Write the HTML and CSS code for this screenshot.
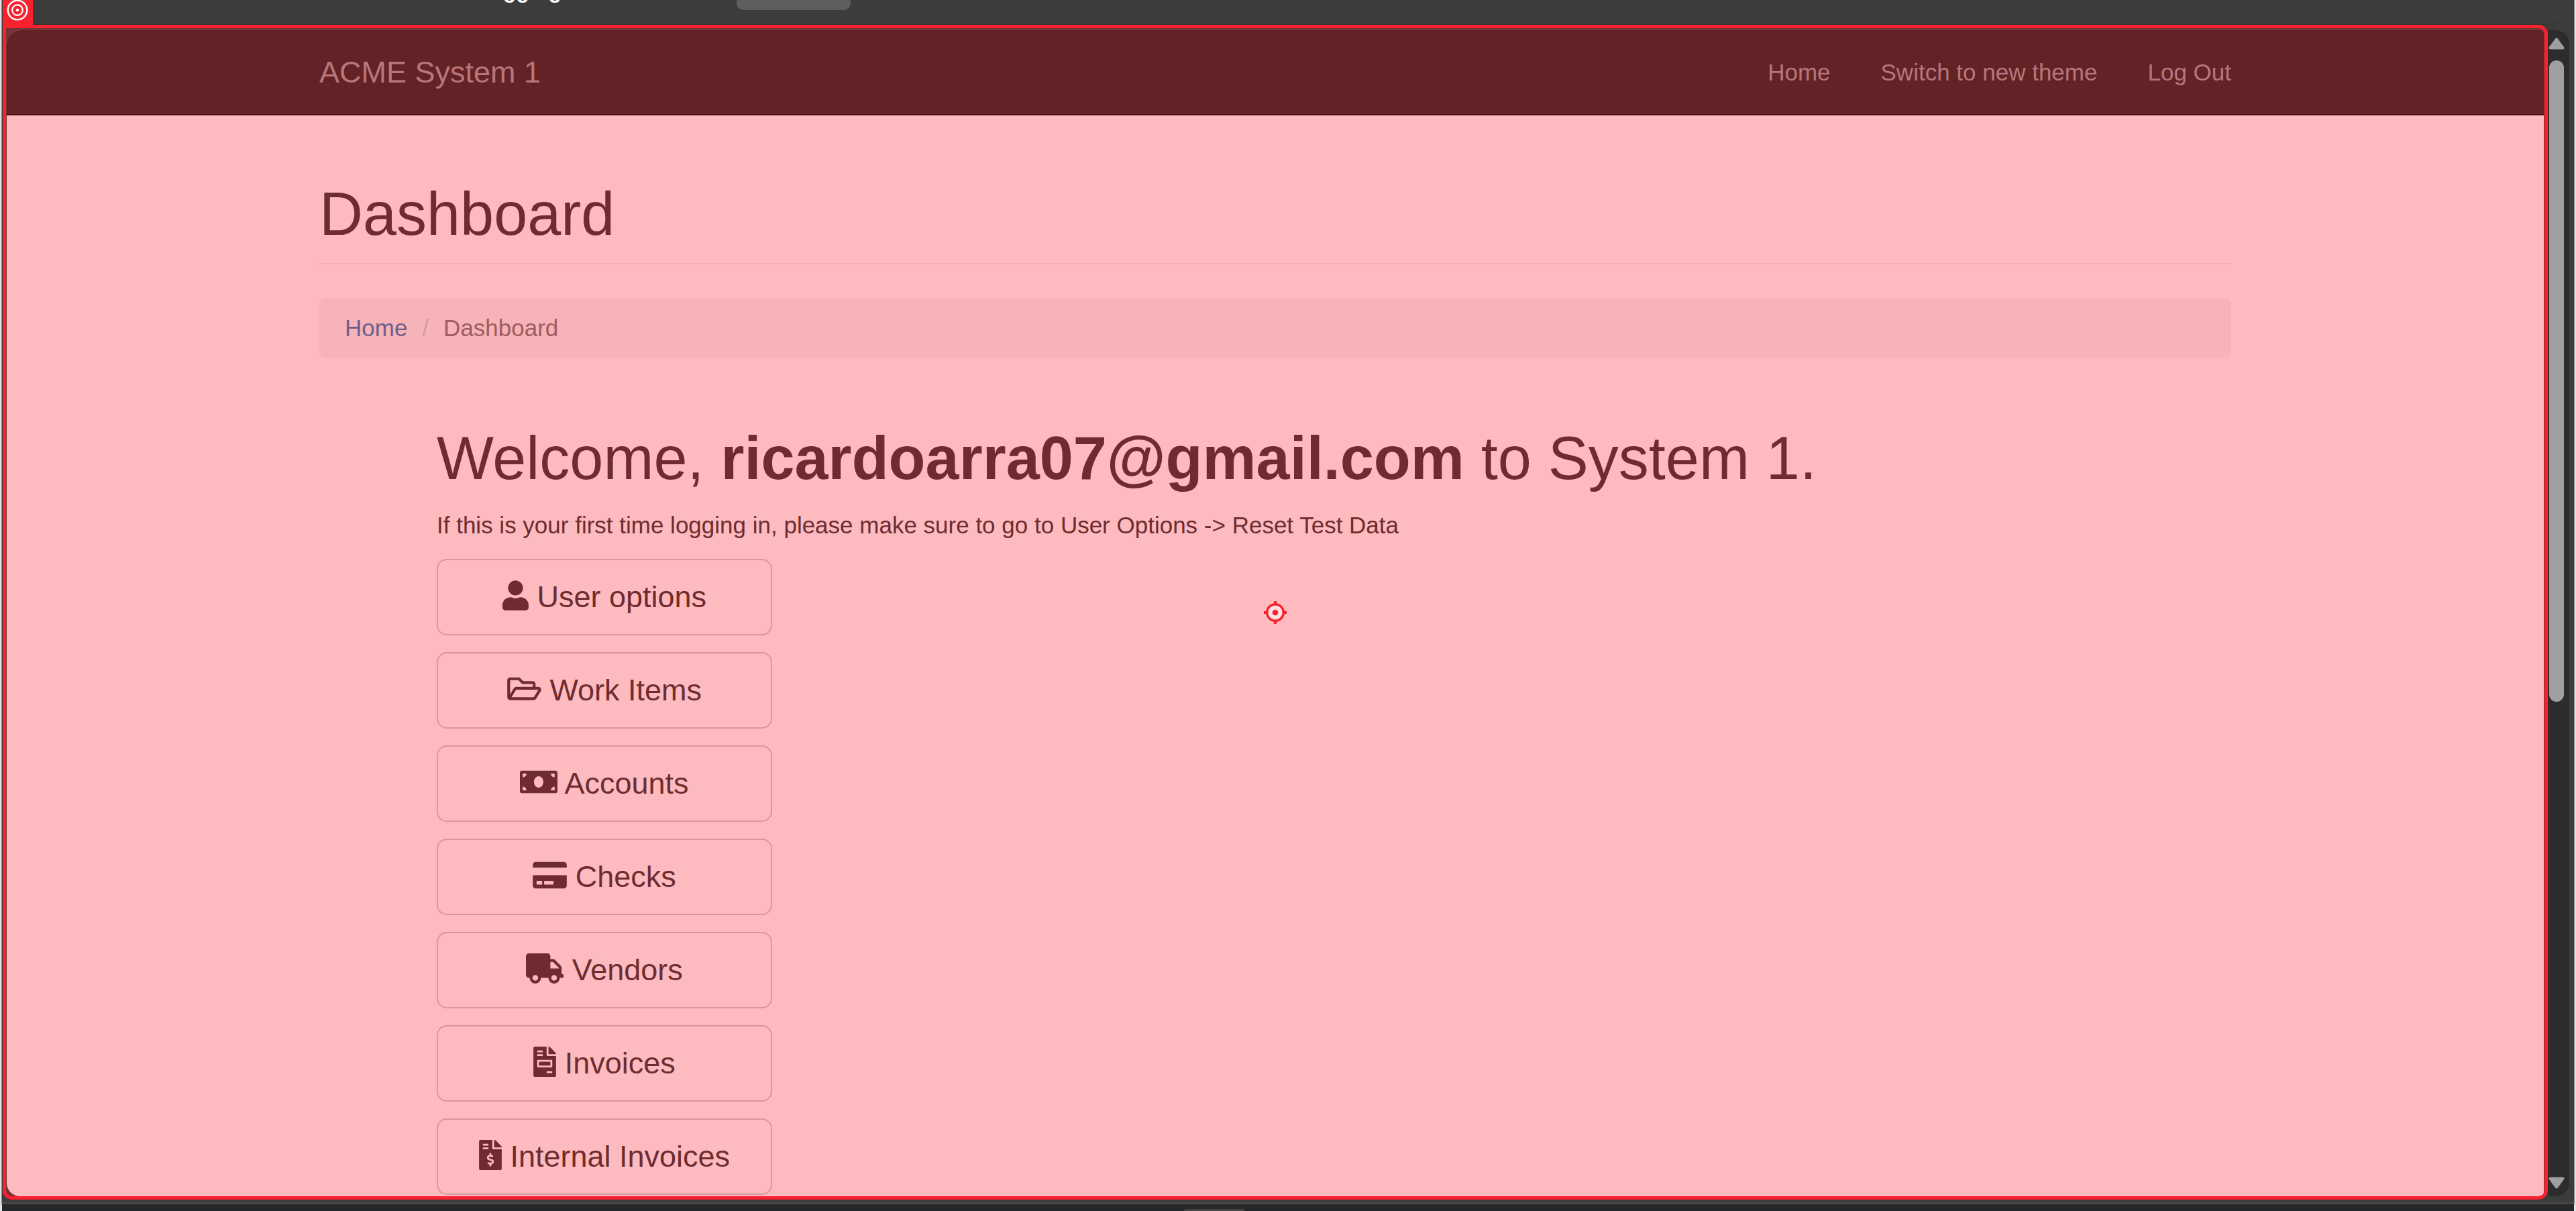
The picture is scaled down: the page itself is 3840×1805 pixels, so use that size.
FILE: index.html
```html
<!DOCTYPE html>
<html lang="en">
<head>
<meta charset="utf-8">
<title>ACME System 1 - Dashboard</title>
<link rel="stylesheet" href="styles.css">
</head>
<body>
<div class="window">
  <div class="toolbar">
    <div class="target-tab">
      <svg class="target-icon" viewBox="0 0 32 32" aria-hidden="true"><g fill="none" stroke="#fff"><circle cx="16" cy="16" r="14.3" stroke-width="2.4"/><circle cx="16" cy="16" r="7.8" stroke-width="2.4"/></g><circle cx="16" cy="16" r="2.2" fill="#fff"/></svg>
    </div>
    <span class="toolbar-title">gging</span>
    <span class="toolbar-chip"></span>
  </div>
  <div class="viewport">
    <div class="frame">
      <div class="page">
        <header class="navbar">
          <div class="container navbar-inner">
            <a class="brand" href="#">ACME System 1</a>
            <nav class="nav">
              <a href="#">Home</a>
              <a href="#">Switch to new theme</a>
              <a href="#">Log Out</a>
            </nav>
          </div>
        </header>
        <main class="container content">
          <h1 class="page-header">Dashboard</h1>
          <ol class="breadcrumb">
            <li><a href="#">Home</a></li>
            <li class="separator" aria-hidden="true">/</li>
            <li class="active">Dashboard</li>
          </ol>
          <section class="welcome">
            <h1>Welcome, <b>ricardoarra07@gmail.com</b> to System 1.</h1>
            <p>If this is your first time logging in, please make sure to go to User Options -&gt; Reset Test Data</p>
            <div class="menu">
              <button class="btn" type="button"><svg class="icon w-14" viewBox="0 0 448 512" aria-hidden="true"><path d="M224 256c70.700 0 128-57.300 128-128S294.700 0 224 0 96 57.300 96 128s57.300 128 128 128zm89.600 32h-16.700c-22.200 10.200-46.900 16-72.900 16s-50.600-5.800-72.900-16h-16.700C60.200 288 0 348.200 0 422.400V464c0 26.500 21.500 48 48 48h352c26.500 0 48-21.500 48-48v-41.600c0-74.200-60.200-134.400-134.400-134.400z"/></svg> User options</button>
              <button class="btn" type="button"><svg class="icon w-18" viewBox="0 0 576 512" aria-hidden="true"><path d="M527.900 224H480v-48c0-26.500-21.500-48-48-48H272l-64-64H48C21.500 64 0 85.500 0 112v288c0 26.500 21.500 48 48 48h400c16.500 0 31.900-8.500 40.700-22.600l79.900-128c20-31.900-3-73.400-40.700-73.400zM48 118c0-3.300 2.700-6 6-6h134.100l64 64H426c3.300 0 6 2.700 6 6v42H152c-16.800 0-32.400 8.800-41.100 23.200L48 351.400zm400 282H72l77.200-128H528z"/></svg> Work Items</button>
              <button class="btn" type="button"><svg class="icon w-20" viewBox="0 0 640 512" aria-hidden="true"><path d="M608 64H32C14.330 64 0 78.330 0 96v320c0 17.670 14.330 32 32 32h576c17.670 0 32-14.330 32-32V96c0-17.670-14.330-32-32-32zM48 400v-64c35.350 0 64 28.650 64 64H48zm0-224v-64h64c0 35.350-28.650 64-64 64zm272 176c-44.190 0-80-42.990-80-96 0-53.020 35.820-96 80-96s80 42.980 80 96c0 53.030-35.830 96-80 96zm272 48h-64c0-35.350 28.650-64 64-64v64zm0-224c-35.350 0-64-28.650-64-64h64v64z"/></svg> Accounts</button>
              <button class="btn" type="button"><svg class="icon w-18" viewBox="0 0 576 512" aria-hidden="true"><path d="M0 432c0 26.500 21.500 48 48 48h480c26.500 0 48-21.500 48-48V256H0v176zm192-68c0-6.600 5.400-12 12-12h136c6.600 0 12 5.400 12 12v40c0 6.600-5.400 12-12 12H204c-6.600 0-12-5.400-12-12v-40zm-128 0c0-6.600 5.400-12 12-12h72c6.600 0 12 5.400 12 12v40c0 6.600-5.400 12-12 12H76c-6.600 0-12-5.400-12-12v-40zM576 80v48H0V80c0-26.500 21.500-48 48-48h480c26.500 0 48 21.500 48 48z"/></svg> Checks</button>
              <button class="btn" type="button"><svg class="icon w-20" viewBox="0 0 640 512" aria-hidden="true"><path d="M624 352h-16V243.900c0-12.700-5.100-24.900-14.100-33.900L494 110.100c-9-9-21.200-14.100-33.900-14.100H416V48c0-26.500-21.500-48-48-48H48C21.500 0 0 21.500 0 48v320c0 26.500 21.500 48 48 48h16c0 53 43 96 96 96s96-43 96-96h128c0 53 43 96 96 96s96-43 96-96h48c8.800 0 16-7.200 16-16v-32c0-8.800-7.200-16-16-16zM160 464c-26.500 0-48-21.500-48-48s21.500-48 48-48 48 21.500 48 48-21.500 48-48 48zm320 0c-26.500 0-48-21.500-48-48s21.500-48 48-48 48 21.500 48 48-21.500 48-48 48zm80-208H416V144h44.100l99.900 99.900V256z"/></svg> Vendors</button>
              <button class="btn" type="button"><svg class="icon w-12" viewBox="0 0 384 512" aria-hidden="true"><path d="M288 256H96v64h192v-64zm89-151L279.100 7c-4.500-4.500-10.600-7-17-7H256v128h128v-6.100c0-6.300-2.500-12.400-7-16.900zm-153 31V0H24C10.700 0 0 10.700 0 24v464c0 13.300 10.700 24 24 24h336c13.300 0 24-10.700 24-24V160H248c-13.200 0-24-10.800-24-24zM64 72c0-4.420 3.580-8 8-8h80c4.420 0 8 3.580 8 8v16c0 4.420-3.580 8-8 8H72c-4.420 0-8-3.580-8-8V72zm0 64c0-4.420 3.580-8 8-8h80c4.420 0 8 3.580 8 8v16c0 4.420-3.580 8-8 8H72c-4.420 0-8-3.580-8-8v-16zm256 304c0 4.420-3.580 8-8 8h-80c-4.420 0-8-3.580-8-8v-16c0-4.420 3.580-8 8-8h80c4.420 0 8 3.580 8 8v16zm0-200v96c0 8.840-7.160 16-16 16H80c-8.840 0-16-7.160-16-16v-96c0-8.840 7.160-16 16-16h224c8.840 0 16 7.160 16 16z"/></svg> Invoices</button>
              <button class="btn" type="button"><svg class="icon w-12" viewBox="0 0 384 512" aria-hidden="true"><path d="M377 105L279.100 7c-4.500-4.500-10.600-7-17-7H256v128h128v-6.100c0-6.300-2.500-12.400-7-16.900zm-153 31V0H24C10.700 0 0 10.700 0 24v464c0 13.300 10.700 24 24 24h336c13.300 0 24-10.700 24-24V160H248c-13.200 0-24-10.800-24-24zM64 72c0-4.420 3.580-8 8-8h80c4.420 0 8 3.580 8 8v16c0 4.420-3.580 8-8 8H72c-4.420 0-8-3.580-8-8V72zm0 80v-16c0-4.420 3.580-8 8-8h80c4.420 0 8 3.580 8 8v16c0 4.420-3.580 8-8 8H72c-4.420 0-8-3.580-8-8zm144 263.880V440c0 4.420-3.580 8-8 8h-16c-4.420 0-8-3.580-8-8v-24.290c-11.290-.58-22.270-4.520-31.370-11.350-3.900-2.930-4.100-8.770-.57-12.140l11.750-11.210c2.770-2.640 6.890-2.760 10.130-.73 3.870 2.420 8.260 3.720 12.820 3.720h28.110c6.500 0 11.800-5.920 11.800-13.190 0-5.950-3.610-11.190-8.770-12.730l-45-13.500c-18.590-5.580-31.580-23.420-31.580-43.390 0-24.520 19.050-44.440 42.670-45.070V232c0-4.420 3.580-8 8-8h16c4.420 0 8 3.580 8 8v24.290c11.290.58 22.270 4.510 31.370 11.350 3.900 2.930 4.100 8.770.57 12.140l-11.750 11.210c-2.770 2.640-6.890 2.760-10.130.73-3.870-2.430-8.260-3.720-12.820-3.720h-28.110c-6.500 0-11.800 5.920-11.800 13.190 0 5.950 3.610 11.190 8.770 12.730l45 13.500c18.590 5.580 31.580 23.420 31.580 43.390 0 24.530-19.050 44.440-42.670 45.070z"/></svg> Internal Invoices</button>
            </div>
          </section>
        </main>
      </div>
      <svg class="crosshair" viewBox="0 0 36 36" aria-hidden="true"><circle cx="18" cy="18" r="12.300" fill="#ffdfe1" stroke="#fa212e" stroke-width="3.400"/><circle cx="18" cy="18" r="4.300" fill="#fa212e"/><path d="M18 1v5M18 30v5M1 18h5M30 18h5" stroke="#fa212e" stroke-width="4"/></svg>
    </div>
    <div class="scrollbar">
      <svg class="arrow" viewBox="0 0 24 18" aria-hidden="true"><path d="M12 2.500 21.500 15.500H2.500Z" fill="#9f9f9f" stroke="#9f9f9f" stroke-width="4" stroke-linejoin="round"/></svg>
      <div class="track"><div class="thumb"></div></div>
      <svg class="arrow" viewBox="0 0 24 18" aria-hidden="true"><path d="M12 15.500 21.500 2.500H2.500Z" fill="#9f9f9f" stroke="#9f9f9f" stroke-width="4" stroke-linejoin="round"/></svg>
    </div>
  </div>
  <div class="window-edge"></div>
</div>
<div class="taskbar"><span class="taskbar-item"></span></div>
</body>
</html>
```

FILE: styles.css
```css
* {
  box-sizing: border-box;
}

body {
  margin: 0;
  height: 100vh;
  display: flex;
  flex-direction: column;
  overflow: hidden;
  background: #e4e4e4;
  color: #6e2c30;
  font-family: "Liberation Sans", Arial, sans-serif;
  font-size: 35px;
  line-height: 50px;
}

a {
  color: inherit;
  text-decoration: none;
}

h1 {
  margin: 0;
  font-size: 90px;
  font-weight: 400;
  line-height: 99px;
}

/* Browser window */
.window {
  flex: 1;
  min-height: 0;
  display: flex;
  flex-direction: column;
  margin: 0 2px;
  border: solid #8a8a8a;
  border-width: 0 1px;
  background: #3c3c3c;
}

.toolbar {
  flex: none;
  height: 37px;
  display: flex;
  align-items: flex-start;
  margin-right: 10px;
  padding-left: 1px;
  border-bottom: 2px solid #353535;
  border-bottom-right-radius: 20px;
}

.target-tab {
  width: 45px;
  height: 37px;
  background: #fa212e;
}

.target-icon {
  display: block;
  width: 32px;
  height: 32px;
  margin: -1px 0 0 6px;
}

.toolbar-title {
  width: 348px;
  margin: -30px 0 0 701px;
  color: #fff;
  font-size: 32px;
  font-weight: 700;
  line-height: 32px;
}

.toolbar-chip {
  width: 170px;
  height: 15px;
  border-radius: 0 0 10px 10px;
  background: #5e5e5e;
}

.viewport {
  flex: 1;
  min-height: 0;
  display: flex;
  padding-left: 1px;
}

.frame {
  position: relative;
  flex: 1;
  display: flex;
  padding: 3px 1px 0;
  overflow: hidden;
  border: 5px solid #fa212e;
  border-radius: 0 14px 14px 14px;
  background: #743338;
}

.scrollbar {
  flex: none;
  width: 32px;
  margin: 8px 7px 5px 0;
  padding: 11px 0;
  display: flex;
  flex-direction: column;
  gap: 16px;
  border-radius: 0 20px 20px 0;
  background: #2c2c2c;
}

.arrow {
  flex: none;
  width: 24px;
  height: 18px;
  margin-left: 1px;
}

.track {
  flex: 1;
  padding-left: 2px;
}

.thumb {
  width: 22px;
  height: 58%;
  border-radius: 11px;
  background: #9f9f9f;
}

.window-edge {
  flex: none;
  height: 7px;
  border-bottom: 3px solid #484848;
}

.taskbar {
  flex: none;
  height: 10px;
  display: flex;
  justify-content: center;
  align-items: flex-end;
  margin: 0 3px;
  padding-right: 220px;
  background: #25282a;
}

.taskbar-item {
  width: 90px;
  height: 3px;
  border-radius: 6px 6px 0 0;
  background: #434343;
}

/* Page */
.page {
  flex: 1;
  min-width: 0;
  overflow: hidden;
  border-radius: 20px 0 0 20px;
  background: #fdbbbf;
}

.container {
  width: 100%;
  max-width: 2850px;
  margin: 0 auto;
}

.navbar {
  border-bottom: 2px solid #500e12;
  background: #622226;
  color: #b8767a;
}

.navbar-inner {
  display: flex;
  justify-content: space-between;
  align-items: center;
  min-height: 125px;
}

.brand {
  font-size: 45px;
}

.nav {
  display: flex;
  gap: 75px;
}

.page-header {
  margin: 98px 0 50px;
  padding-bottom: 23px;
  border-bottom: 2px solid #f1afb3;
}

.breadcrumb {
  display: flex;
  gap: 22px;
  margin: 0 0 100px;
  padding: 20px 38px;
  border-radius: 10px;
  background: #f6b4b8;
  color: #9e5c60;
  list-style: none;
}

.breadcrumb a {
  color: #6e5e8d;
}

.separator {
  color: #d9979b;
}

.welcome {
  padding-left: 175px;
}

.welcome p {
  margin: 25px 0;
}

.menu {
  display: flex;
  flex-direction: column;
  gap: 25px;
  width: 500px;
}

.btn {
  padding: 25px 0;
  border: 2px solid #d9979b;
  border-radius: 15px;
  background: transparent;
  color: #6e2c30;
  font: 45px/60px "Liberation Sans", Arial, sans-serif;
  text-align: center;
}

.icon {
  height: 45px;
  vertical-align: -5px;
  fill: currentColor;
}

.w-12 {
  width: 34px;
}

.w-14 {
  width: 39px;
}

.w-18 {
  width: 51px;
}

.w-20 {
  width: 56px;
}

/* Click point marker, centred over the frame */
.crosshair {
  position: absolute;
  inset: 0;
  width: 36px;
  height: 36px;
  margin: auto;
}
```
